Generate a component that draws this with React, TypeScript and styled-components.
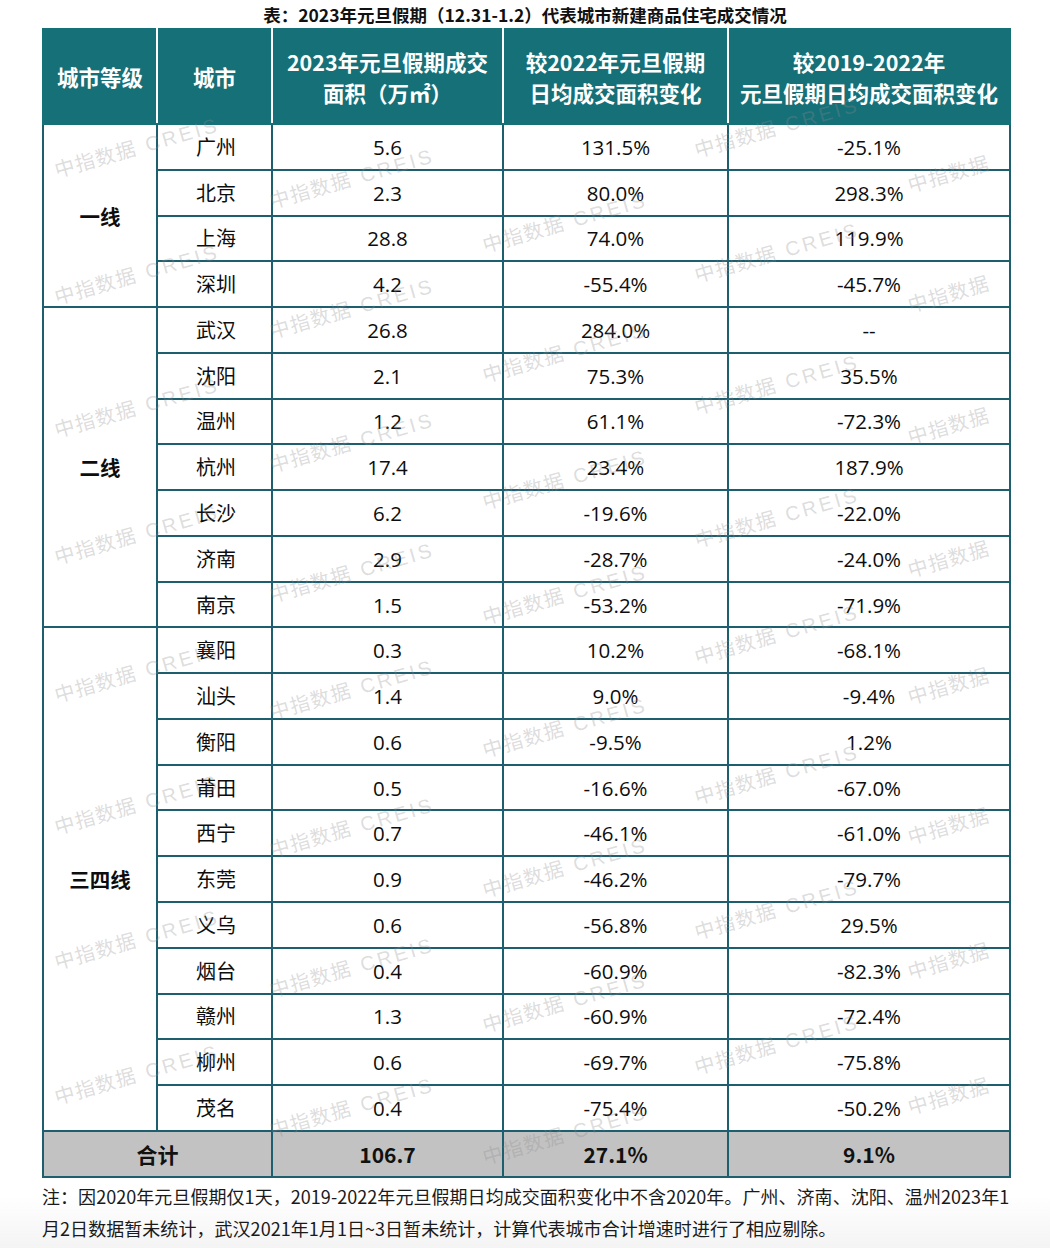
import React from "react";
import styled, { createGlobalStyle } from "styled-components";

const GlobalStyle = createGlobalStyle`
  html, body { margin: 0; padding: 0; background: #ffffff; }
  body { font-family: "Open Sans", "Noto Sans CJK SC", sans-serif; color: #111; }
`;

const HEAD_BG = "#167078";
const LINE = "#1d5e6f";

type Row = [string, string, string, string];
const groups: { grade: string; rows: Row[] }[] = [
  {
    grade: "一线",
    rows: [
      ["广州", "5.6", "131.5%", "-25.1%"],
      ["北京", "2.3", "80.0%", "298.3%"],
      ["上海", "28.8", "74.0%", "119.9%"],
      ["深圳", "4.2", "-55.4%", "-45.7%"],
    ],
  },
  {
    grade: "二线",
    rows: [
      ["武汉", "26.8", "284.0%", "--"],
      ["沈阳", "2.1", "75.3%", "35.5%"],
      ["温州", "1.2", "61.1%", "-72.3%"],
      ["杭州", "17.4", "23.4%", "187.9%"],
      ["长沙", "6.2", "-19.6%", "-22.0%"],
      ["济南", "2.9", "-28.7%", "-24.0%"],
      ["南京", "1.5", "-53.2%", "-71.9%"],
    ],
  },
  {
    grade: "三四线",
    rows: [
      ["襄阳", "0.3", "10.2%", "-68.1%"],
      ["汕头", "1.4", "9.0%", "-9.4%"],
      ["衡阳", "0.6", "-9.5%", "1.2%"],
      ["莆田", "0.5", "-16.6%", "-67.0%"],
      ["西宁", "0.7", "-46.1%", "-61.0%"],
      ["东莞", "0.9", "-46.2%", "-79.7%"],
      ["义乌", "0.6", "-56.8%", "29.5%"],
      ["烟台", "0.4", "-60.9%", "-82.3%"],
      ["赣州", "1.3", "-60.9%", "-72.4%"],
      ["柳州", "0.6", "-69.7%", "-75.8%"],
      ["茂名", "0.4", "-75.4%", "-50.2%"],
    ],
  },
];

const wmCols: { x: number; ys: number[]; short?: boolean }[] = [
  { x: 55, ys: [170, 297, 430, 557, 695, 827, 962, 1097] },
  { x: 270, ys: [201, 331, 465, 595, 712, 850, 990, 1130] },
  { x: 483, ys: [245, 375, 502, 617, 750, 890, 1025, 1157] },
  { x: 695, ys: [150, 275, 407, 540, 657, 797, 932, 1067] },
  { x: 908, ys: [185, 305, 437, 570, 697, 837, 972, 1107], short: true },
];

const Page = styled.div`
  position: relative;
  width: 1050px;
  height: 1248px;
  overflow: hidden;
  background: linear-gradient(#ffffff 0, #ffffff 1195px, #f4f4f4 1248px);
`;

const Title = styled.h1`
  margin: 0;
  padding-top: 4px;
  height: 24px;
  text-align: center;
  font-family: "Noto Sans CJK SC", sans-serif;
  font-weight: 700;
  font-size: 17.5px;
  line-height: 22px;
  color: #111;
  letter-spacing: 0px;
`;

const TableWrap = styled.div`
  padding-left: 42px;
`;

const Table = styled.table`
  border-collapse: collapse;
  table-layout: fixed;
  width: 967px;
`;

const HeadCell = styled.th`
  background: ${HEAD_BG};
  color: #fff;
  height: 93px;
  padding: 0;
  font-family: "Noto Sans CJK SC", sans-serif;
  font-weight: 700;
  font-size: 21.5px;
  line-height: 31px;
  text-align: center;
  vertical-align: middle;
  border: 2px solid #ffffff;
  border-top-color: ${HEAD_BG};
  border-bottom-color: ${HEAD_BG};
  &:first-child { border-left-color: ${HEAD_BG}; }
  &:last-child { border-right-color: ${HEAD_BG}; }
`;

const BodyRow = styled.tr`
  height: 45.77px;
`;

const Cell = styled.td`
  border: 2px solid ${LINE};
  padding: 0;
  text-align: center;
  vertical-align: middle;
  font-size: 20.5px;
  line-height: 24px;
  color: #0d0d0d;
`;

const GradeCell = styled(Cell)`
  font-family: "Noto Sans CJK SC", sans-serif;
  font-weight: 700;
  font-size: 20.5px;
`;

const CityCell = styled(Cell)`
  font-family: "Noto Sans CJK SC", sans-serif;
  font-size: 20px;
  padding-left: 3px;
`;

const TotalRow = styled.tr`
  height: 46px;
  background: #c2c2c2;
`;

const TotalCell = styled.td`
  border: 2px solid ${LINE};
  border-top-color: #2a7c7c;
  padding: 0;
  text-align: center;
  vertical-align: middle;
  font-family: "Noto Sans CJK SC", sans-serif;
  font-weight: 700;
  font-size: 21px;
  color: #111;
`;

const Note = styled.div`
  padding: 2px 0 0 42px;
  font-family: "Noto Sans CJK SC", sans-serif;
  font-size: 18px;
  line-height: 32px;
  color: #1a1a1a;
  letter-spacing: 0.05px;
  white-space: nowrap;
`;

const Watermark = styled.div`
  position: absolute;
  pointer-events: none;
  white-space: nowrap;
  transform: rotate(-16deg);
  transform-origin: left center;
  font-family: "Noto Sans CJK SC", sans-serif;
  font-size: 20px;
  line-height: 24px;
  color: rgba(140, 140, 140, 0.3);
  letter-spacing: 1px;
`;

const Latin = styled.span`
  font-family: "Liberation Sans", sans-serif;
  letter-spacing: 3px;
  margin-left: 10px;
`;

export default function App() {
  return (
    <>
      <GlobalStyle />
      <Page>
        <Title>表：2023年元旦假期（12.31-1.2）代表城市新建商品住宅成交情况</Title>
        <TableWrap>
          <Table>
            <colgroup>
              <col style={{ width: 114 }} />
              <col style={{ width: 115 }} />
              <col style={{ width: 231 }} />
              <col style={{ width: 225 }} />
              <col style={{ width: 282 }} />
            </colgroup>
            <thead>
              <tr>
                <HeadCell>城市等级</HeadCell>
                <HeadCell>城市</HeadCell>
                <HeadCell>
                  2023年元旦假期成交
                  <br />
                  面积（万㎡）
                </HeadCell>
                <HeadCell>
                  较2022年元旦假期
                  <br />
                  日均成交面积变化
                </HeadCell>
                <HeadCell>
                  较2019-2022年
                  <br />
                  元旦假期日均成交面积变化
                </HeadCell>
              </tr>
            </thead>
            <tbody>
              {groups.map((g) =>
                g.rows.map((r, i) => (
                  <BodyRow key={r[0]}>
                    {i === 0 && <GradeCell rowSpan={g.rows.length}>{g.grade}</GradeCell>}
                    <CityCell>{r[0]}</CityCell>
                    <Cell>{r[1]}</Cell>
                    <Cell>{r[2]}</Cell>
                    <Cell>{r[3]}</Cell>
                  </BodyRow>
                ))
              )}
              <TotalRow>
                <TotalCell colSpan={2}>合计</TotalCell>
                <TotalCell>106.7</TotalCell>
                <TotalCell>27.1%</TotalCell>
                <TotalCell>9.1%</TotalCell>
              </TotalRow>
            </tbody>
          </Table>
        </TableWrap>
        <Note>
          注：因2020年元旦假期仅1天，2019-2022年元旦假期日均成交面积变化中不含2020年。广州、济南、沈阳、温州2023年1
          <br />
          月2日数据暂未统计，武汉2021年1月1日~3日暂未统计，计算代表城市合计增速时进行了相应剔除。
        </Note>
        {wmCols.map((c) =>
          c.ys.map((y) => (
            <Watermark key={`${c.x}-${y}`} style={{ left: c.x, top: y - 12 }}>
              中指数据{!c.short && <Latin>CREIS</Latin>}
            </Watermark>
          ))
        )}
      </Page>
    </>
  );
}
